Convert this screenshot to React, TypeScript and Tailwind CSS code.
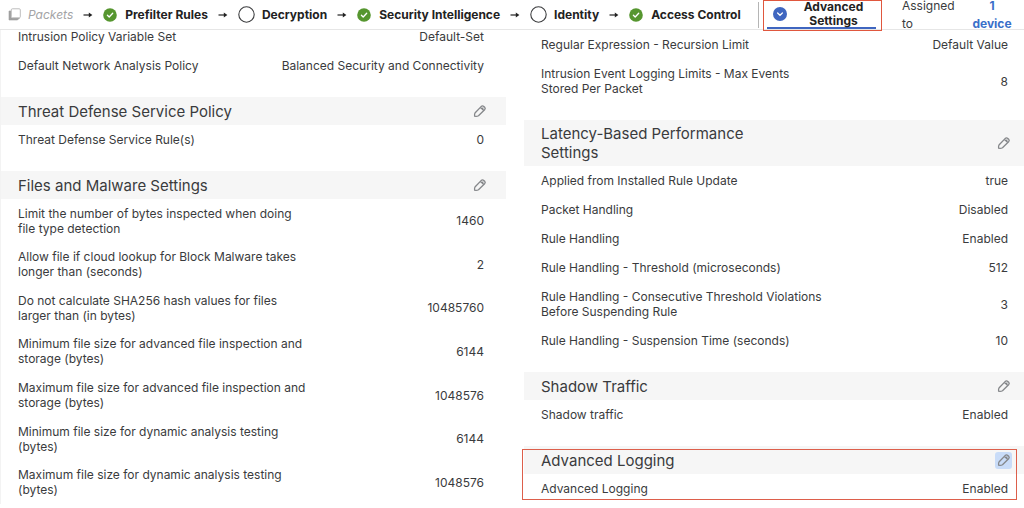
import React from "react";

type Setting = { label: string; value: string };

const fileSettings: Setting[] = [
  { label: "Limit the number of bytes inspected when doing file type detection", value: "1460" },
  { label: "Allow file if cloud lookup for Block Malware takes longer than (seconds)", value: "2" },
  { label: "Do not calculate SHA256 hash values for files larger than (in bytes)", value: "10485760" },
  { label: "Minimum file size for advanced file inspection and storage (bytes)", value: "6144" },
  { label: "Maximum file size for advanced file inspection and storage (bytes)", value: "1048576" },
  { label: "Minimum file size for dynamic analysis testing (bytes)", value: "6144" },
  { label: "Maximum file size for dynamic analysis testing (bytes)", value: "1048576" },
];

const latencySettings: Setting[] = [
  { label: "Applied from Installed Rule Update", value: "true" },
  { label: "Packet Handling", value: "Disabled" },
  { label: "Rule Handling", value: "Enabled" },
  { label: "Rule Handling - Threshold (microseconds)", value: "512" },
  { label: "Rule Handling - Consecutive Threshold Violations Before Suspending Rule", value: "3" },
  { label: "Rule Handling - Suspension Time (seconds)", value: "10" },
];

function PencilIcon() {
  return (
    <svg viewBox="0 0 14 14" className="size-3.5" fill="none" stroke="currentColor" strokeWidth="1.3" strokeLinejoin="round" aria-hidden="true">
      <path d="M1.6 12.2Q1.3 9.9 2.2 8.7L8.1 2.6Q9.5 1.3 10.8 2.4L11.7 3.2Q12.8 4.4 11.6 5.7L5.5 11.7Q4 12.6 1.6 12.2Z" />
      <path d="M7.4 3.4 10.9 6.5M9.2 4.8 10.4 3.6" />
    </svg>
  );
}

function CheckIcon() {
  return (
    <svg viewBox="0 0 14 14" className="size-3.5 shrink-0" aria-hidden="true">
      <circle cx="7" cy="7" r="6.8" fill="#56962f" />
      <path d="m4.4 7.2 1.8 1.8 3.5-3.7" fill="none" stroke="#fff" strokeWidth="1.3" strokeLinecap="round" strokeLinejoin="round" />
    </svg>
  );
}

function EmptyIcon() {
  return (
    <svg viewBox="0 0 17 17" className="size-[17px] shrink-0" aria-hidden="true">
      <circle cx="8.5" cy="8.5" r="7.7" fill="#fff" stroke="#3c3d3f" strokeWidth="1.1" />
    </svg>
  );
}

function Arrow() {
  return (
    <svg viewBox="0 0 10 8" className="h-2 w-2.5 shrink-0" aria-hidden="true">
      <path d="M.5 4H7" stroke="#222" strokeWidth="1.2" />
      <path d="M5.8 1.4 9.4 4 5.8 6.6Z" fill="#222" />
    </svg>
  );
}

function Step({ done, children }: { done?: boolean; children: React.ReactNode }) {
  return (
    <button type="button" className={`flex items-center font-bold whitespace-nowrap ${done ? "gap-2" : "gap-[7px]"}`}>
      {done ? <CheckIcon /> : <EmptyIcon />}
      {children}
    </button>
  );
}

function Heading({ title, active }: { title: string; active?: boolean }) {
  return (
    <div className="flex min-h-7 items-center justify-between bg-[#f6f6f6] py-1 pr-[18px] pl-[17px]">
      <h2 className="max-w-[250px] text-[15px] leading-[19px]">{title}</h2>
      <button
        type="button"
        aria-label={`Edit ${title}`}
        className={`-my-1 flex size-[17px] items-center justify-center rounded-[3px] text-[#85878a] ${active ? "bg-[#c9dcf8]" : ""}`}
      >
        <PencilIcon />
      </button>
    </div>
  );
}

function Rows({ items, even }: { items: Setting[]; even?: boolean }) {
  return (
    <dl className={even ? "grid min-h-[305px] auto-rows-fr" : ""}>
      {items.map(({ label, value }) => (
        <div key={label} className={`flex items-center justify-between pr-[22px] pl-[17px] leading-[15px] ${even ? "py-1.5" : "py-[7px]"}`}>
          <dt className="max-w-[288px]">{label}</dt>
          <dd>{value}</dd>
        </div>
      ))}
    </dl>
  );
}

export default function App() {
  return (
    <div className="overflow-x-clip bg-white font-['Inter',sans-serif] text-xs text-[#3a3b3d]">
      <header className="relative z-10 flex h-[30px] items-center border-b border-[#e6e6e6] bg-white pl-2 text-[#222]">
        <nav aria-label="Policy steps" className="flex items-center gap-2.5">
          <span className="flex items-center gap-[7px] text-[#a3a4a6] italic">
            <svg viewBox="0 0 13 13" className="size-[13px]" aria-hidden="true">
              <path d="M1 3v9h8.5l2-2H3V3Z" fill="#a0a0a0" stroke="#a0a0a0" strokeWidth=".6" />
              <rect x="3.3" y=".8" width="9" height="9" rx="1" fill="#fff" stroke="#b5b5b5" strokeWidth=".9" />
            </svg>
            Packets
          </span>
          <Arrow />
          <Step done>Prefilter Rules</Step>
          <Arrow />
          <Step>Decryption</Step>
          <Arrow />
          <Step done>Security Intelligence</Step>
          <Arrow />
          <Step>Identity</Step>
          <Arrow />
          <Step done>Access Control</Step>
        </nav>
        <div className="ml-auto flex h-full items-center">
          <span className="mr-1 h-[26px] w-px bg-[#b5b5b5]" />
          <div className="flex h-[31px] w-[119px] self-start border border-[#e0573e] pr-[5px] pb-px pl-[3px]">
            <button type="button" className="flex flex-1 items-center border-b-2 border-[#3f66c0] pl-[6px] font-bold">
              <svg viewBox="0 0 14 14" className="size-3.5 shrink-0" aria-hidden="true">
                <circle cx="7" cy="7" r="7" fill="#3f66c0" />
                <path d="m4.6 6 2.4 2.3L9.4 6" fill="none" stroke="#fff" strokeWidth="1.2" strokeLinecap="round" />
              </svg>
              <span className="flex-1 pr-2 pl-3 leading-[14px]">Advanced Settings</span>
            </button>
          </div>
          <span className="ml-5 w-[54px] leading-[18px] text-[#3a3b3d]">Assigned to</span>
          <a href="#devices" className="mr-3 ml-4 w-10 text-center leading-[18px] font-bold text-[#3a6fc9]">
            1 device
          </a>
        </div>
      </header>

      <main className="-mr-[6px] grid grid-cols-2 items-start gap-[18px]">
        <div className="-mt-2 flex flex-col gap-[17px] border-l border-[#f3f3f3]">
          <Rows
            items={[
              { label: "Intrusion Policy Variable Set", value: "Default-Set" },
              { label: "Default Network Analysis Policy", value: "Balanced Security and Connectivity" },
            ]}
          />
          <section>
            <Heading title="Threat Defense Service Policy" />
            <Rows items={[{ label: "Threat Defense Service Rule(s)", value: "0" }]} />
          </section>
          <section>
            <Heading title="Files and Malware Settings" />
            <Rows items={fileSettings} even />
          </section>
        </div>

        <div className="flex flex-col gap-[17px]">
          <Rows
            items={[
              { label: "Regular Expression - Recursion Limit", value: "Default Value" },
              { label: "Intrusion Event Logging Limits - Max Events Stored Per Packet", value: "8" },
            ]}
          />
          <section>
            <Heading title="Latency-Based Performance Settings" />
            <Rows items={latencySettings} />
          </section>
          <section>
            <Heading title="Shadow Traffic" />
            <Rows items={[{ label: "Shadow traffic", value: "Enabled" }]} />
          </section>
          <section className="relative">
            <Heading title="Advanced Logging" active />
            <Rows items={[{ label: "Advanced Logging", value: "Enabled" }]} />
            <div className="pointer-events-none absolute top-[3px] right-[13px] bottom-[3px] -left-0.5 border border-[#dd5f4b]" />
          </section>
        </div>
      </main>
    </div>
  );
}
